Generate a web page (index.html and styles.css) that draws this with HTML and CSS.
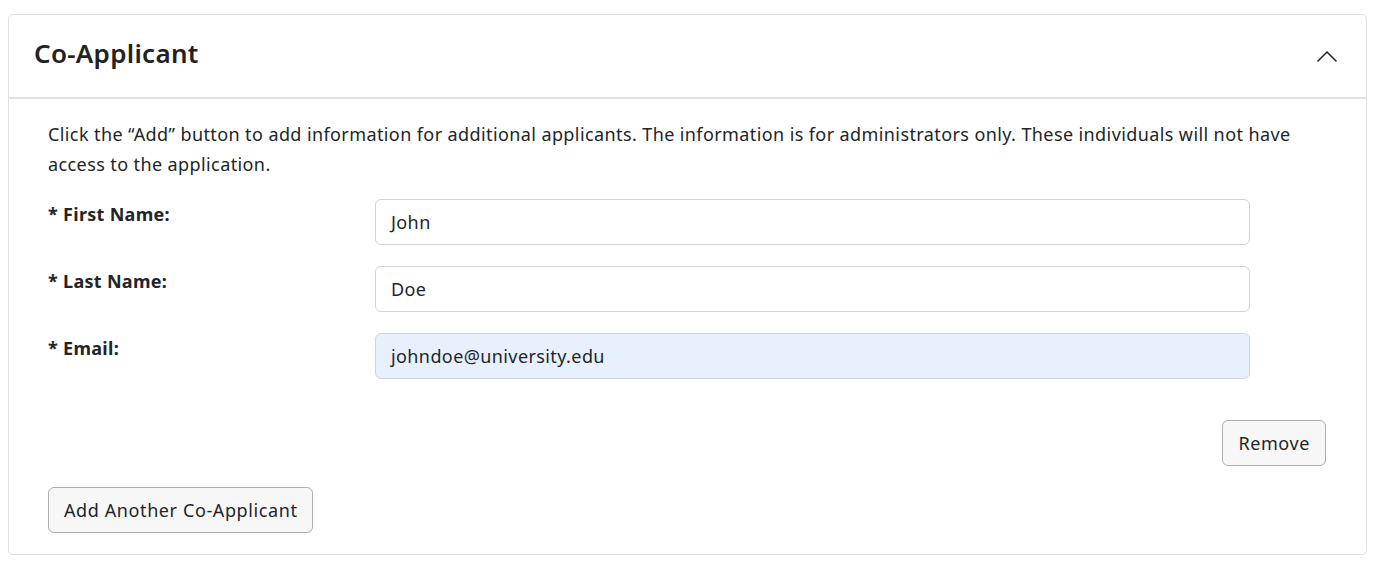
FILE: index.html
```html
<!DOCTYPE html>
<html>
<head>
<meta charset="utf-8">
<link rel="stylesheet" href="styles.css">
</head>
<body>
<div class="card">
  <div class="card-header">
    <h2 class="title">Co-Applicant</h2>
    <svg class="chevron" width="22" height="14" viewBox="0 0 22 14"><path d="M1.5 12.5 L11 3 L20.5 12.5" fill="none" stroke="#222" stroke-width="1.5"/></svg>
  </div>
  <div class="card-body">
    <p class="intro">Click the “Add” button to add information for additional applicants. The information is for administrators only. These individuals will not have access to the application.</p>
    <div class="row">
      <label class="label">* First Name:</label>
      <div class="field">John</div>
    </div>
    <div class="row">
      <label class="label">* Last Name:</label>
      <div class="field">Doe</div>
    </div>
    <div class="row">
      <label class="label">* Email:</label>
      <div class="field autofill">johndoe@university.edu</div>
    </div>
    <div class="actions">
      <button class="btn">Remove</button>
    </div>
    <div class="add-row">
      <button class="btn">Add Another Co-Applicant</button>
    </div>
  </div>
</div>
</body>
</html>
```
FILE: styles.css
```css
* { box-sizing: border-box; }
body {
  margin: 0;
  padding: 14px 11px 12px 8px;
  font-family: "Noto Sans", "Open Sans", sans-serif;
  color: #212529;
  background: #fff;
}
.card {
  border: 1px solid #dfe1e4;
  border-radius: 5px;
  background: #fff;
}
.card-header {
  height: 84px;
  border-bottom: 2px solid #dfe1e4;
  display: flex;
  align-items: center;
  justify-content: space-between;
  padding: 0 28px 6px 25px;
}
.title {
  margin: 0;
  font-size: 26px;
  font-weight: 600;
  letter-spacing: 0.3px;
  color: #222;
}
.chevron { display: block; margin-top: 6px; }
.card-body {
  padding: 20px 40px 21px 39px;
}
.intro {
  margin: 0 0 20px 0;
  font-size: 18px;
  line-height: 30px;
  letter-spacing: 0.4px;
}
.row {
  display: flex;
  align-items: flex-start;
  margin-bottom: 21px;
}
.label {
  width: 327px;
  flex: none;
  font-weight: 700;
  font-size: 18px;
  line-height: 30px;
  letter-spacing: 0.3px;
}
.field {
  width: 875px;
  height: 46px;
  border: 1px solid #ced4da;
  border-radius: 6px;
  padding: 0 15px;
  display: flex;
  align-items: center;
  font-size: 18px;
  letter-spacing: 0.4px;
  background: #fff;
}
.field.autofill { background: #e8f0fe; }
.actions {
  display: flex;
  justify-content: flex-end;
  margin-top: 41px;
}
.btn {
  font-family: inherit;
  font-size: 18px;
  letter-spacing: 0.6px;
  color: #212529;
  background: #f7f7f7;
  border: 1px solid #aeaeae;
  border-radius: 6px;
  height: 46px;
  padding: 0 15px;
}
.add-row { margin-top: 21px; }
```
